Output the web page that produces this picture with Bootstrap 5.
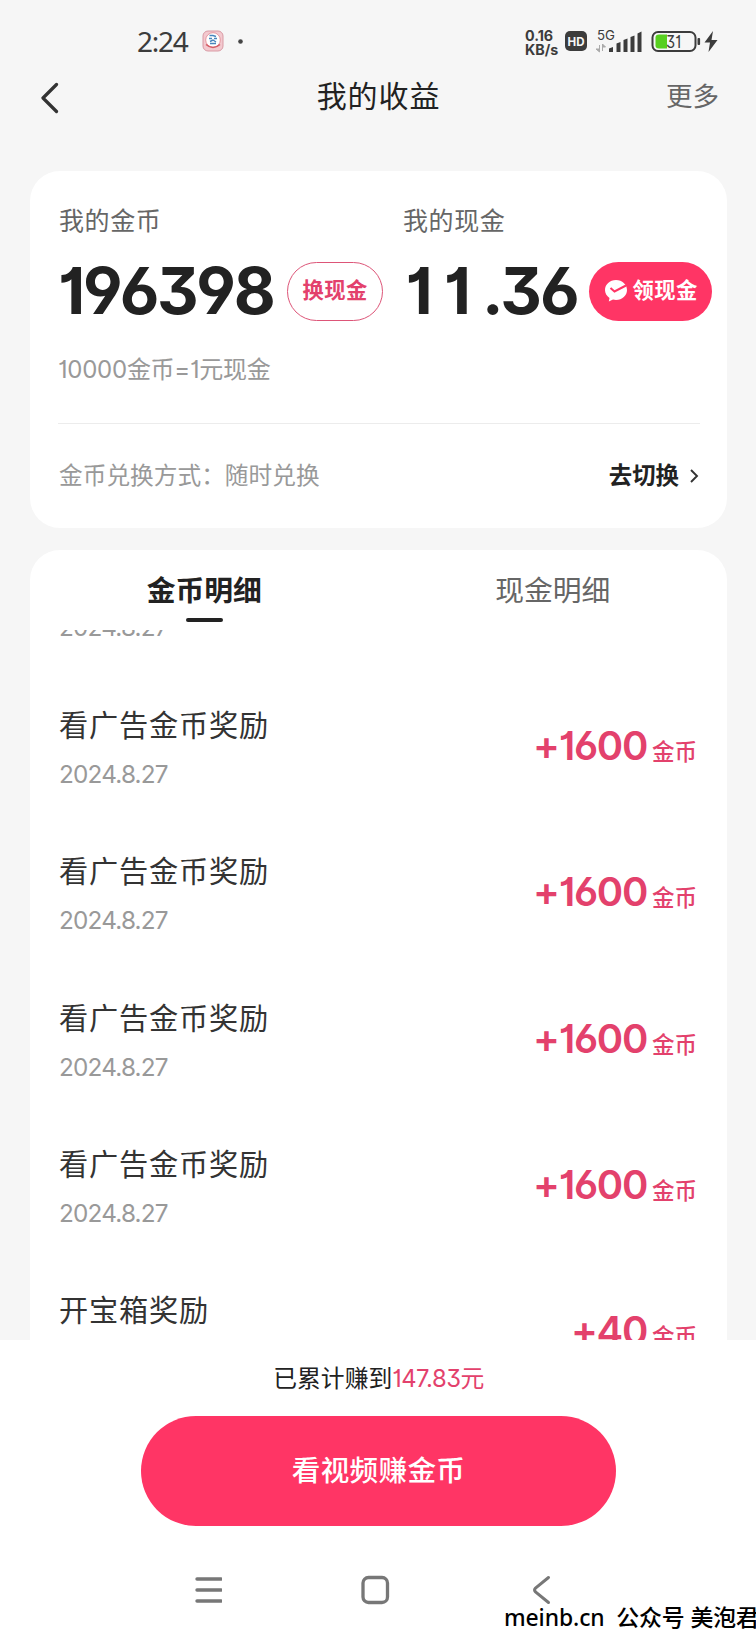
<!DOCTYPE html>
<html lang="zh-CN">
<head>
<meta charset="utf-8">
<meta name="viewport" content="width=device-width, initial-scale=1">
<title>我的收益</title>
<link href="https://cdn.jsdelivr.net/npm/bootstrap@5.3.0/dist/css/bootstrap.min.css" rel="stylesheet">
<style>
:root{--pink:#ff3565;--rose:#e3416c;--ink:#222;--grey:#999}
body{font-family:Inter,"Noto Sans CJK SC",sans-serif;background:#f6f6f6;color:var(--ink);line-height:1;font-feature-settings:"cv01","cv03","cv04","cv09"}
.screen{width:756px;height:1638px;overflow:hidden}
.screen svg{display:block;flex:none}
.t{white-space:nowrap}
.status{height:60px;padding:22px 37px 0 137px;color:#3c3c3c}
.clock{font:400 28px/38px "Noto Sans",sans-serif;letter-spacing:-1.3px;width:65px}
.speed{font:700 14.3px/13.5px Inter,sans-serif;width:35px}
.topbar{height:111px;padding:11px 37px 50px 41px}
.title{font-size:30px;letter-spacing:.9px}
.more{font-size:26.5px;color:#666}
.panel{width:697px;margin-left:30px;border:0;border-radius:30px;background:#fff}
.wallet{height:357px;padding:37px 15px 0 29px}
.lbl{font-size:25px;letter-spacing:.6px;height:26px;line-height:26px;color:#666}
.big{font-weight:650;font-size:64.5px;height:60px;line-height:60px}
.coins{letter-spacing:-2.3px;width:228px;text-indent:-1px}
.cash{letter-spacing:-1.8px;width:187px;text-indent:3px}
.cash span{letter-spacing:11px}
.pill{height:59px;border-radius:30px;font-size:21.3px;font-weight:700;letter-spacing:.4px;padding:0}
.pill-line{width:97px;border:1.5px solid #dd5578;color:var(--rose)}
.pill-fill{width:123px;background:var(--pink);color:#fff;border:0;gap:5px}
.rate{font-size:24px;letter-spacing:-.25px;color:var(--grey);height:30px;line-height:30px;margin:34px 0 0 -1px}
.rule{height:1px;background:#ececec;width:642px;margin:38px 0 0 -1px}
.mode{font-size:23.7px;color:var(--grey);height:104px;width:642px}
.switch{color:var(--ink);font-weight:700;font-size:23.4px}
.detail{height:790px;margin-top:22px;border-radius:30px 30px 0 0;overflow:hidden}
.tabs{height:80px}
.tabs>div{width:50%;font-size:28.8px;color:#666}
.tabs .on{font-weight:700;color:var(--ink)}
.tabs span{margin:27px 0 12px}
.tabs i{display:block;height:4px;width:37px;border-radius:2px;background:transparent}
.tabs .on i{background:var(--ink)}
.feed{height:710px;overflow:hidden;padding:0 30px 0 29px}
.feed-in{margin-top:-16px}
.entry{height:146.3px;padding-top:8px}
.name{font-size:29.2px;letter-spacing:.8px;height:34px;line-height:34px;color:#333}
.date{font-size:24.3px;letter-spacing:-.8px;height:26px;line-height:26px;margin-top:18px;color:var(--grey)}
.amt{color:var(--rose);font-weight:600;font-size:40px;height:50px;line-height:50px;letter-spacing:-1.3px;margin-top:12px}
.amt span{font-size:22.5px;font-weight:500;letter-spacing:0;margin-left:5px}
.foot{height:298px;background:#fff}
.sum{font-size:23.8px;height:78px;padding-left:1px}
.sum span{color:var(--rose);letter-spacing:-.5px}
.cta{width:475px;height:110px;border-radius:55px;border:0;background:var(--pink);color:#fff;font-weight:500;font-size:28.6px;letter-spacing:.3px;margin:-2px 0 0 141px}
.sysnav{height:128px;padding-left:195px;color:#777}
.mark-line{position:absolute;left:504px;top:1600px;font:500 22.9px/36px "Noto Sans","Noto Sans CJK SC",sans-serif;letter-spacing:-.1px;color:#000}
</style>
</head>
<body>
<div class="screen position-relative">
  <div class="status d-flex align-items-start">
    <div class="clock t">2:24</div>
    <svg class="mt-2 ms-0" width="22" height="22" viewBox="0 0 22 22"><rect x="1" y="1" width="20" height="20" rx="5" fill="#f3c9cf" stroke="#d99aa4"/><circle cx="11" cy="10" r="7.3" fill="#fff" stroke="#e2868f" stroke-width=".8"/><path d="M7.500 5.500h3.500l3 1M7 8.500h3M12 8.500h3M8 11.500l3-1.500 3 2M8 13.500h6" stroke="#4a86bd" stroke-width="1.500" fill="none"/><path d="M4 14.500q7 6 14 0" stroke="#d45d66" stroke-width="1.600" fill="none"/></svg>
    <svg style="margin:17px 0 0 14px" width="5" height="5"><circle cx="2.5" cy="2.5" r="2.3" fill="#444"/></svg>
    <div class="speed t ms-auto" style="margin-top:7px">0.16<br>KB/s</div>
    <svg width="159" height="32" viewBox="560 26 159 32" style="margin-top:4px" fill="#3c3c3c">
      <rect x="565" y="31" width="22" height="20" rx="5"/>
      <text x="567.5" y="45.5" font-family="Inter" font-weight="700" font-size="12" textLength="17" lengthAdjust="spacingAndGlyphs" fill="#f6f6f6">HD</text>
      <text x="597" y="39.5" font-family="Inter" font-size="13" textLength="18" lengthAdjust="spacingAndGlyphs">5G</text>
      <path d="M599.5 45v7l-3.500-3h3M602.500 51v-7l3 3h-3" fill="#aaa" stroke="#aaa"/>
      <path d="M609 48.500l4-1.500v5h-4zM616.500 43.500l4-1.500v10h-4zM623.500 40l4-1.500V52h-4zM630.500 37l4-1.500V52h-4zM637.500 33.500l4-2V52h-4z"/>
      <rect x="652.500" y="32" width="43" height="19" rx="5.500" fill="none" stroke="#3c3c3c" stroke-width="2"/>
      <path d="M659 34.500h8v14h-8q-3.500 0-3.500-3v-8q0-3 3.500-3z" fill="#57cf1f"/>
      <rect x="697.500" y="38" width="2.600" height="7" rx="1"/>
      <text x="666" y="47.500" font-family="Inter" font-size="17" textLength="15" lengthAdjust="spacingAndGlyphs">31</text>
      <path d="M713 31l-8.500 11.500h5.500L708.500 52l9-12h-6z"/>
    </svg>
  </div>
  <header class="topbar d-flex align-items-center justify-content-between">
    <svg class="mt-1" width="18" height="32" viewBox="0 0 18 32"><path d="M15.500 2.500L2 16l13.500 13.500" fill="none" stroke="#333" stroke-width="3.200" stroke-linecap="round" stroke-linejoin="round"/></svg>
    <div class="title t ms-4 ps-2">我的收益</div>
    <div class="more t">更多</div>
  </header>

  <section class="card panel wallet">
    <div class="d-flex"><div class="lbl t" style="width:344px">我的金币</div><div class="lbl t">我的现金</div></div>
    <div class="d-flex align-items-center" style="margin-top:27px">
      <div class="big coins t">196398</div>
      <button class="btn pill pill-line t">换现金</button>
      <div class="big cash t" style="margin-left:19px"><span>11</span>.36</div>
      <button class="btn pill pill-fill t d-flex align-items-center justify-content-center">
        <svg width="24" height="24" viewBox="0 0 24 24"><path d="M12 1C5.800 1 1 5.500 1 11c0 3.300 1.700 6 4.500 8L4.800 22.500 9 20.600c1 .3 2 .4 3 .4 6.200 0 11-4.500 11-10S18.200 1 12 1z" fill="#fff"/><path d="M6.500 9l4 3.500L22 6.500" fill="none" stroke="#ff3565" stroke-width="2"/></svg>领现金</button>
    </div>
    <div class="rate t">10000金币=1元现金</div>
    <div class="rule"></div>
    <div class="mode d-flex align-items-center justify-content-between">
      <span class="t">金币兑换方式：随时兑换</span>
      <span class="switch t d-flex align-items-center">去切换<svg class="ms-2" width="14" height="18" viewBox="0 0 14 18"><path d="M4 3l6 6-6 6" fill="none" stroke="#333" stroke-width="1.900"/></svg></span>
    </div>
  </section>

  <section class="card panel detail">
    <div class="tabs d-flex">
      <div class="on t d-flex flex-column align-items-center"><span>金币明细</span><i></i></div>
      <div class="t d-flex flex-column align-items-center"><span>现金明细</span><i></i></div>
    </div>
    <div class="feed"><div class="feed-in">
      <div class="entry pt-0" style="height:87px"><div class="date t mt-0">2024.8.27</div></div>
      <div class="entry d-flex justify-content-between"><div><div class="name t">看广告金币奖励</div><div class="date t">2024.8.27</div></div><div class="amt t">+1600<span>金币</span></div></div>
      <div class="entry d-flex justify-content-between"><div><div class="name t">看广告金币奖励</div><div class="date t">2024.8.27</div></div><div class="amt t">+1600<span>金币</span></div></div>
      <div class="entry d-flex justify-content-between"><div><div class="name t">看广告金币奖励</div><div class="date t">2024.8.27</div></div><div class="amt t">+1600<span>金币</span></div></div>
      <div class="entry d-flex justify-content-between"><div><div class="name t">看广告金币奖励</div><div class="date t">2024.8.27</div></div><div class="amt t">+1600<span>金币</span></div></div>
      <div class="entry d-flex justify-content-between"><div><div class="name t">开宝箱奖励</div></div><div class="amt t">+40<span>金币</span></div></div>
    </div></div>
  </section>

  <footer class="foot">
    <div class="sum t d-flex align-items-center justify-content-center">已累计赚到<span>147.83元</span></div>
    <button class="btn cta t">看视频赚金币</button>
    <div class="sysnav d-flex align-items-center">
      <svg width="27" height="30" viewBox="0 0 27 30"><path d="M2 4h24M2 15h24M2 26h24" stroke="#777" stroke-width="3.400" stroke-linecap="round"/></svg>
      <svg style="margin-left:138px" width="30" height="30" viewBox="0 0 30 30"><rect x="3" y="2.500" width="24.500" height="25" rx="5.500" fill="none" stroke="#777" stroke-width="3.300"/></svg>
      <svg style="margin-left:142px" width="20" height="30" viewBox="0 0 20 30"><path d="M16.500 2.500L3.500 13q-2 2 0 4l13 10.500" fill="none" stroke="#777" stroke-width="3" stroke-linecap="round"/></svg>
    </div>
  </footer>
  <div class="mark-line t">meinb.cn&nbsp; 公众号 美泡君</div>
</div>
<script src="https://cdn.jsdelivr.net/npm/bootstrap@5.3.0/dist/js/bootstrap.bundle.min.js"></script>
</body>
</html>
